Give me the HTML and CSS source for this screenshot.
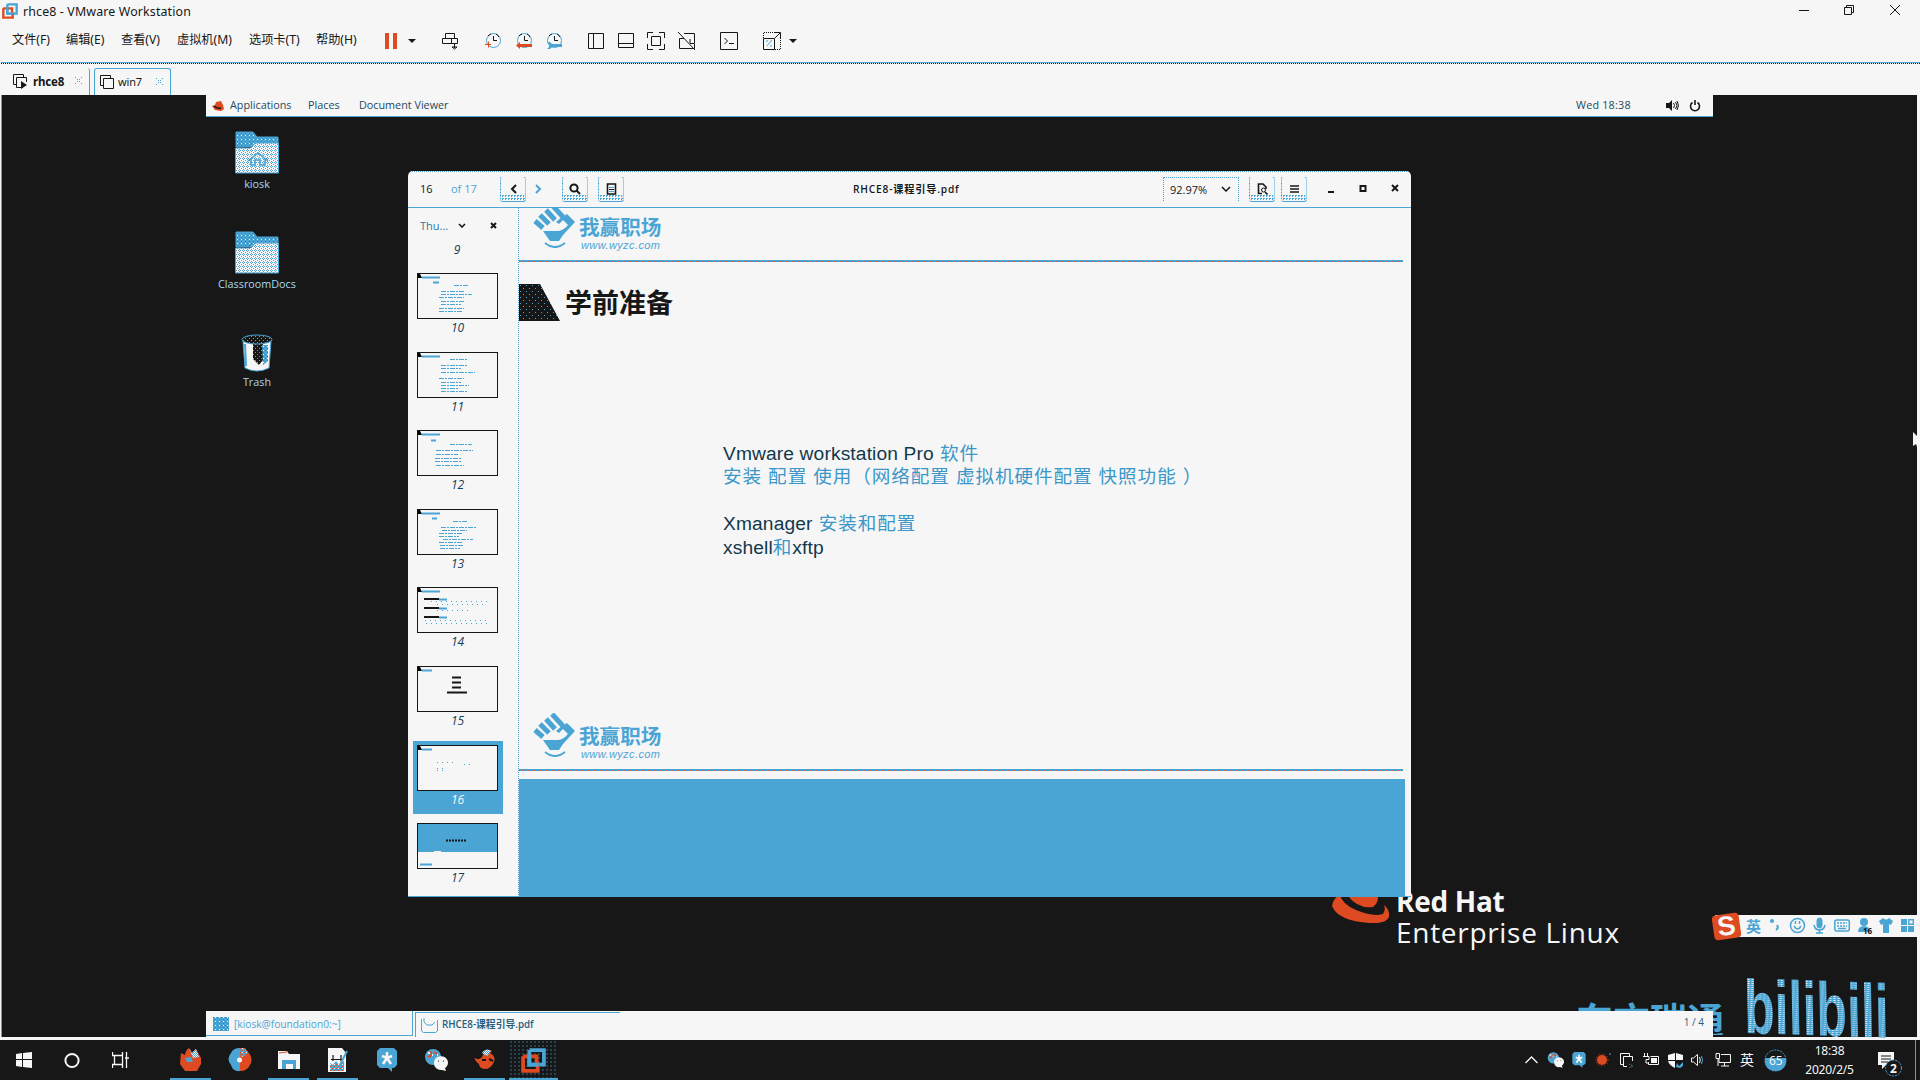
FILE: index.html
```html
<!DOCTYPE html>
<html lang="zh-CN">
<head>
<meta charset="utf-8">
<title>rhce8 - VMware Workstation</title>
<link rel="stylesheet" href="styles.css">
</head>
<body>
<svg class="defs" width="0" height="0">
  <defs>
    <pattern id="mesh" width="2" height="2" patternUnits="userSpaceOnUse"><rect width="2" height="2" fill="#f6f6f6"/><path d="M0 0h1v1H0zM1 1h1v1H1z" fill="#4aa5d5"/></pattern>
    <pattern id="light" width="4" height="4" patternUnits="userSpaceOnUse"><rect width="4" height="4" fill="#f6f6f6"/><path d="M0 0h1v1H0zM2 1h1v1H2zM0 2h1v1H0zM1 3h1v1H1zM3 3h1v1H3z" fill="#4aa5d5"/></pattern>
    <pattern id="warm" width="4" height="4" patternUnits="userSpaceOnUse"><rect width="4" height="4" fill="#4aa5d5"/><path d="M0 0h1v1H0zM2 2h1v1H2z" fill="#de4a21"/><path d="M2 0h1v1H2z" fill="#f6f6f6"/></pattern>
    <pattern id="night" width="4" height="4" patternUnits="userSpaceOnUse"><rect width="4" height="4" fill="#171717"/><path d="M0 0h1v1H0zM2 2h1v1H2z" fill="#4aa5d5"/></pattern>
    <pattern id="speck" width="6" height="6" patternUnits="userSpaceOnUse"><rect width="6" height="6" fill="#171717"/><path d="M1 1h1v1H1zM4 4h1v1H4z" fill="#4aa5d5"/></pattern>
    <symbol id="folder" viewBox="0 0 44 43">
      <path d="M1 16V1h17l4 5h21v9z" fill="url(#warm)" stroke="#4aa5d5"/>
      <path d="M0.500 42V17h15l5-5h23v30z" fill="url(#light)" stroke="#4aa5d5"/>
    </symbol>
    <symbol id="brand" viewBox="0 0 43 44">
      <g stroke="#4aa5d5" stroke-width="5"><path d="M2 17l8 7M7 11l9 9M13 6l9 10M19 1l11 12"/></g>
      <path d="M10 27h14q6 0 11-6l-5-5-4 4-3-2 6-5 5-3 8 8-12 13-4 6H17z" fill="#4aa5d5"/>
      <path d="M12 39q10 8 20 0" fill="none" stroke="#4aa5d5" stroke-width="2"/>
    </symbol>
    <symbol id="clock" viewBox="0 0 17 18">
      <circle cx="8.500" cy="8.500" r="7" fill="none" stroke="#4aa5d5"/><path d="M3 4a7 7 0 0 1 3-2M11 2a7 7 0 0 1 3 3" fill="none" stroke="#171717"/><path d="M8.500 4v4.500H12" fill="none" stroke="#171717"/>
    </symbol>
    <symbol id="star" viewBox="0 0 20 24">
      <path d="M3 0h14l3 3v14l-3 3h-2v4l-4-4H3l-3-3V3z" fill="#4aa5d5"/>
      <path d="M10 4v6l5-2M10 10l4 6M10 10l-4 6M10 10L5 8" fill="none" stroke="#f6f6f6" stroke-width="2.600"/>
    </symbol>
    <symbol id="chat" viewBox="0 0 24 22">
      <circle cx="9" cy="8" r="8" fill="#4aa5d5"/><path d="M5 3l3 1M4 8l4-2M10 3l3 2" stroke="#de4a21" stroke-width="2"/><path d="M8 6h1M13 6h1M4 4h2" stroke="#f6f6f6" stroke-width="2"/>
      <path d="M10 14a7 6.500 0 1 1 11 5l1 3-4-1a7 6.500 0 0 1-8-7z" fill="#f6f6f6"/><path d="M14 12h1M19 12h1" stroke="#171717"/>
    </symbol>
    <symbol id="vm" viewBox="0 0 24 24">
      <path d="M8 2h14v14h-5M8 2v14h9" fill="none" stroke="#4aa5d5" stroke-width="3.600"/>
      <path d="M2 8h13v6M2 8v14h14v-8" fill="none" stroke="#de4a21" stroke-width="3.600"/>
      <path d="M8 6v10h9" fill="none" stroke="#4aa5d5" stroke-width="3.600"/>
    </symbol>
  </defs>
</svg>

<div class="screen">
  <header class="titlebar">
    <svg width="16" height="16"><use href="#vm"/></svg>
    <span class="app-name">rhce8 - VMware Workstation</span>
    <svg class="controls" width="102" height="12" fill="none" stroke="#171717"><path d="M0 5.500h10M45.500 2.500h7v7h-7zM47.500 2.500v-2h7v7h-2M91 0l10 10M101 0L91 10"/></svg>
  </header>
  <div class="menubar">
    <nav class="menus"><span>文件(F)</span><span>编辑(E)</span><span>查看(V)</span><span>虚拟机(M)</span><span>选项卡(T)</span><span>帮助(H)</span></nav>
    <div class="toolbar">
      <svg width="12" height="16"><path d="M0 0h4v16H0zM8 0h4v16H8z" fill="#de4a21"/></svg>
      <svg width="9" height="5"><path d="M0 0h8L4 4z" fill="#171717"/></svg>
      <svg width="17" height="17" fill="none" stroke="#171717"><path d="M3.500 .5h9v5h-9zM.5 5.500h9v5h-9zM9.500 5.500h6v5h-6zM12.500 11v4M10 14h5l-2.500 2z"/></svg>
      <svg width="17" height="18"><use href="#clock"/><path d="M0 12.500h6M3.500 9.500v6" stroke="#de4a21"/></svg>
      <svg width="17" height="18"><use href="#clock"/><path d="M0 13.500l4-3.500v2h12v3H4v2z" fill="#de4a21"/></svg>
      <svg width="17" height="18"><use href="#clock"/><path d="M1 10h3l2 2h10v3H6l-2 2H1l2-2v-3z" fill="#4aa5d5"/></svg>
      <svg width="16" height="16" fill="none" stroke="#171717"><path d="M.5 .5h15v15H.5zM5.500 0v16"/></svg>
      <svg width="16" height="16" fill="none" stroke="#171717"><path d="M.5 .5h15v14H.5zM0 10.500h16"/></svg>
      <svg width="18" height="18" fill="none" stroke="#171717"><path d="M4.500 4.500h9v9h-9zM.5 6V.5H6M12 .5h5.500V6M17.500 12v5.500H12M6 17.500H.5V12"/></svg>
      <svg width="18" height="18" fill="none" stroke="#171717"><path d="M6 1.500h10.500v10H12M1.500 6.500v10h15V12M6 6.500H1.500M12 7v4M0 0l17 18"/></svg>
      <svg width="18" height="18" fill="none" stroke="#171717"><path d="M.5 .5h17v17H.5zM4.500 6l3 3-3 3M9 11.500h5"/></svg>
      <svg width="18" height="18" fill="none" stroke="#171717"><path d="M.5 6.500h11v11H.5zM12 6l5-5M12 .5h5.500V6"/><path stroke-dasharray="1 1" d="M.5 6V.5H12M17.500 6v11.500H12"/><path stroke="#4aa5d5" d="M4 14l5-6M3 9h2M7 14h2"/></svg>
      <svg width="9" height="5"><path d="M0 0h8L4 4z" fill="#171717"/></svg>
    </div>
  </div>
  <div class="tabs">
    <div class="tab tab-on"><svg width="15" height="15" fill="none" stroke="#171717"><path d="M3 10.500H.5V.5h10V3M8 13.500H3.500v-10h10V8"/><path d="M8 7l6 4-6 4z" fill="#171717" stroke="none"/></svg><b>rhce8</b><svg class="tab-x" width="7" height="7"><path d="M0 0l7 7M7 0L0 7" stroke="#4aa5d5" stroke-dasharray="1.400 1.400"/></svg></div>
    <div class="tab tab-off"><svg width="15" height="15" fill="none" stroke="#171717"><path d="M3 10.500H.5V.5h10V3M3.500 3.500h10v10h-10z"/></svg><span>win7</span><svg class="tab-x" width="7" height="7"><path d="M0 0l7 7M7 0L0 7" stroke="#4aa5d5" stroke-dasharray="1.400 1.400"/></svg></div>
  </div>

  <main class="vm-view">
    <div class="guest">
      <div class="gnome-bar">
        <svg width="12" height="10"><path d="M0 5l3-1 1-3 5-1 2 4 1 4-3 2-6-1z" fill="#de4a21"/><path d="M2 5q3 3 7 2" fill="none" stroke="#171717" stroke-width="1.500"/></svg>
        <span class="g-apps">Applications</span><span class="g-places">Places</span><span class="g-doc">Document Viewer</span>
        <span class="g-clock">Wed 18:38</span>
        <svg width="13" height="11" fill="none" stroke="#171717"><path d="M0 3h3l3-3v11L3 8H0z" fill="#171717" stroke="none"/><path d="M7.500 3q2 2.500 0 5M9.500 2q3 3.500 0 7M11 1q3 4.500 0 9"/></svg>
        <svg class="power" width="12" height="12" fill="none" stroke="#171717" stroke-width="1.600"><path d="M3.500 2.500a4.500 4.500 0 1 0 5 0M6 0v5"/></svg>
      </div>
      <div class="desktop">
        <div class="shortcut kiosk"><svg width="44" height="43"><use href="#folder"/><path d="M13 30l10-8 10 8M16 28v6h4v-5h5v5h5v-6" fill="none" stroke="#4aa5d5" stroke-width="1.600"/></svg><span>kiosk</span></div>
        <div class="shortcut docs"><svg width="44" height="43"><use href="#folder"/></svg><span>ClassroomDocs</span></div>
        <div class="shortcut trash"><svg width="32" height="38"><path d="M2 7l2 27q12 6 24 0l2-27z" fill="#f6f6f6" stroke="#4aa5d5"/><path d="M12 10h10v16l-4 5-6-6z" fill="url(#night)"/><path d="M21 11h6v16l-5 4z" fill="url(#warm)"/><path d="M4 10l1 22" stroke="#4aa5d5" stroke-width="2"/><ellipse cx="16" cy="5.500" rx="15" ry="4.500" fill="url(#night)" stroke="#4aa5d5"/></svg><span>Trash</span></div>

        <div class="rhel">
          <svg width="57" height="44"><path d="M0 27Q1 19 8 16q2 9 16 15 17 7 27 4 3-4 1-9 6 5 5 12-3 7-19 6Q6 42 0 27z" fill="#de4a21"/><path d="M16 15h29q3 8-4 13-15 2-25-11z" fill="#de4a21"/></svg>
          <div><b>Red Hat</b><span>Enterprise Linux</span></div>
        </div>
        <div class="partner">东方瑞通</div>

        <section class="viewer">
          <header class="viewer-bar">
            <span class="page-no">16</span><span class="page-of">of 17</span>
            <span class="btn prev"><svg width="7" height="10"><path d="M6 1L2 5l4 4" fill="none" stroke="#171717" stroke-width="2"/></svg></span>
            <span class="next"><svg width="7" height="10"><path d="M1 1l4 4-4 4" fill="none" stroke="#4aa5d5" stroke-width="2"/></svg></span>
            <span class="btn find"><svg width="12" height="12" fill="none" stroke="#171717" stroke-width="2"><circle cx="5" cy="5" r="3.600"/><path d="M7.500 7.500L11 11"/></svg></span>
            <span class="btn note"><svg width="11" height="12"><path d="M1.500 1h8v10h-8z" fill="none" stroke="#171717" stroke-width="1.600"/><path d="M3 4.500h5M3 8.500h5" stroke="#4aa5d5"/><path d="M3 6.500h5" stroke="#171717"/></svg></span>
            <span class="doc-title">RHCE8-课程引导.pdf</span>
            <span class="zoom-box"><span>92.97%</span><svg width="10" height="6"><path d="M1 1l4 4 4-4" fill="none" stroke="#171717" stroke-width="1.500"/></svg></span>
            <span class="btn page"><svg width="11" height="12"><path d="M5 10.500H1.500V1H6l3 3v2" fill="none" stroke="#171717" stroke-width="1.600"/><circle cx="6.500" cy="7" r="2" fill="none" stroke="#171717"/><path d="M8 9l2.500 2.500" stroke="#171717" stroke-width="1.600"/></svg></span>
            <span class="btn burger"><svg width="9" height="8"><path d="M0 1h9M0 4h9M0 7h9" stroke="#171717" stroke-width="1.500"/></svg></span>
            <svg class="win-ctl" width="71" height="9"><path d="M0 8h6M64 1l6 6M70 1l-6 6" stroke="#171717" stroke-width="2"/><path d="M32.500 2h5v5h-5z" fill="none" stroke="#171717" stroke-width="2"/></svg>
          </header>
          <div class="viewer-body">
            <aside class="thumbs">
              <div class="thumbs-head"><span>Thu...</span><svg width="8" height="5"><path d="M1 1l3 3 3-3" fill="none" stroke="#171717" stroke-width="1.600"/></svg><svg width="7" height="7"><path d="M1 1l5 5M6 1L1 6" stroke="#171717" stroke-width="2"/></svg></div>
              <i class="first-no">9</i>
              <div class="thumb"><svg width="81" height="46"><path d="M24 18.500h23M24 21.500h31M22 24.500h25M24 28.500h24M24 31.500h20M22 35.500h25M22 38.500h24M37 12.500h14" class="ln"/><path d="M5 4.500h18M16 9.500h6" class="hd"/><path d="M1 1h2l2 4H1z"/></svg><i>10</i></div>
              <div class="thumb"><svg width="81" height="46"><path d="M24 13.500h26M24 16.500h20M24 20.500h34M22 26.500h25M24 30.500h20M24 33.500h28M24 36.500h18M24 39.500h26M33 7.500h18" class="ln"/><path d="M5 4.500h18" class="hd"/><path d="M1 1h2l2 4H1z"/></svg><i>11</i></div>
              <div class="thumb"><svg width="81" height="46"><path d="M19 20.500h37M19 24.500h22M18 28.500h27M18 31.500h26M19 35.500h28M33 14.500h22" class="ln"/><path d="M5 4.500h18M14 10.500h5" class="hd"/><path d="M1 1h2l2 4H1z"/></svg><i>12</i></div>
              <div class="thumb"><svg width="81" height="46"><path d="M24 18.500h36M25 21.500h25M22 24.500h23M22 27.500h20M26 30.500h30M22 33.500h24M23 36.500h24M23 39.500h20M36 12.500h14" class="ln"/><path d="M5 4.500h18M15 9.500h5" class="hd"/><path d="M1 1h2l2 4H1z"/></svg><i>13</i></div>
              <div class="thumb"><svg width="81" height="46"><path d="M14 14.500h56M20 17.500h50M20 23.500h34M8 33.500h64M9 36.500h62" class="dots"/><path d="M7 12h15M7 21h15M7 30h15" stroke="#171717" stroke-width="2"/><path d="M5 4.500h18M22 12.500h8M22 21.500h8M22 30.500h8" class="hd"/><path d="M1 1h2l2 4H1z"/></svg><i>14</i></div>
              <div class="thumb"><svg width="81" height="46"><path d="M5 4.500h10" class="hd"/><path d="M35 11.500h9M35 16.500h9M35 21.500h9M30 26.500h20" stroke="#171717" stroke-width="2"/><path d="M1 1h2l2 4H1z"/></svg><i>15</i></div>
              <div class="thumb chosen"><svg width="81" height="46"><path d="M20 17.500h20M47 19.500h8M20 23.500h7M20 25.500h6" class="dots"/><path d="M5 4.500h10" class="hd"/><path d="M1 1h2l2 4H1z"/></svg><i>16</i></div>
              <div class="thumb last"><svg width="81" height="46"><path d="M1 1h79v28H1z" fill="#4aa5d5"/><path d="M29 17.500h20" stroke="#171717" stroke-width="2" stroke-dasharray="2 1"/><path d="M17 28.500h7" stroke="#f6f6f6"/><path d="M3 41.500h12" class="hd"/></svg><i>17</i></div>
            </aside>
            <div class="pages">
              <div class="logo logo-cut"><svg width="43" height="44"><use href="#brand"/></svg><div><b>我赢职场</b><small>www.wyzc.com</small></div></div>
              <div class="rule"></div>
              <h1 class="slide-title"><svg width="41" height="37"><path d="M0 0h21l20 37H0z" fill="url(#speck)"/></svg><span>学前准备</span></h1>
              <div class="slide-text">
                <p><em>Vmware workstation Pro</em> 软件</p>
                <p>安装 配置 使用（网络配置 虚拟机硬件配置 快照功能 ）</p>
                <p class="gap"><em>Xmanager</em> 安装和配置</p>
                <p><em>xshell</em>和<em>xftp</em></p>
              </div>
              <div class="logo logo-foot"><svg width="43" height="44"><use href="#brand"/></svg><div><b>我赢职场</b><small>www.wyzc.com</small></div></div>
              <div class="rule"></div>
              <div class="next-page"></div>
            </div>
          </div>
        </section>
      </div>
      <div class="guest-tasks">
        <div class="gt gt-a"><svg width="16" height="14"><rect width="16" height="14" fill="url(#warm)"/></svg><span>[kiosk@foundation0:~]</span></div>
        <div class="gt gt-b"><svg width="17" height="16" fill="none" stroke="#4aa5d5"><path d="M.5 2v12l2 1.500h12l2-1.500V3M3 1v4l3 3h5l3-3"/></svg><span>RHCE8-课程引导.pdf</span></div>
        <span class="pager">1 / 4</span>
      </div>
    </div>
    <div class="ime">
      <span class="sogou">S</span>
      <span class="ime-lang">英</span>
      <svg width="157" height="18" fill="none" stroke="#4aa5d5">
        <circle cx="2" cy="4" r="2" fill="#4aa5d5" stroke="none"/><path d="M7 8q2 3-1 5" stroke-width="2"/>
        <g transform="translate(20 0)"><circle cx="7.500" cy="8.500" r="7" stroke-width="1.500"/><path d="M4 9q3.500 6 7 0M5.500 4v3M9.500 4v3" stroke-width="1.500"/></g>
        <g transform="translate(43 0)"><rect x="4" y="1" width="5" height="10" rx="2.500" fill="#4aa5d5"/><path d="M1 8q1 5 5.500 5t5.500-5M6.500 13v3M3 16h7" stroke-width="1.500"/></g>
        <g transform="translate(64 2)"><rect x=".8" y="1" width="14.500" height="11" rx="2" stroke-width="1.500"/><path d="M3 4h10M3 7h10" stroke-width="1.500" stroke-dasharray="2 1"/><path d="M4 9.500h8" stroke-width="1.500"/></g>
        <g transform="translate(87 0)" stroke="none" fill="#4aa5d5"><circle cx="7" cy="5" r="4"/><path d="M1 15q0-6 6-6t6 6z"/><text x="6" y="17" font-size="8" font-weight="bold" fill="#171717">16</text></g>
        <path transform="translate(109 1)" d="M0 3l4-3q3 3 6 0l4 3-2 4-2-1v9H4V6L2 7z" fill="#4aa5d5" stroke="none"/>
        <path transform="translate(131 2)" d="M0 0h6v6H0zM0 7h6v6H0zM7 7h6v6H7z" fill="#4aa5d5" stroke="none"/><path d="M138.800 2.800h4.500v4.500h-4.500z" stroke-width="1.400"/>
      </svg>
    </div>
    <div class="watermark">bilibili</div>
    <svg class="pointer" width="4" height="16"><path d="M0 0v14l3-2 1 3V4z" fill="#f6f6f6"/></svg>
  </main>

  <footer class="taskbar">
    <div class="launch">
      <span><svg width="16" height="16"><path d="M0 2l6-1v6H0zM7 1l9-1v7H7zM0 8h6v7l-6-1zM7 8h9v8l-9-1z" fill="#f6f6f6"/></svg></span>
      <span><svg width="17" height="17"><circle cx="8" cy="8.500" r="6.600" fill="none" stroke="#f6f6f6" stroke-width="2"/></svg></span>
      <span class="wide"><svg width="17" height="16" fill="none" stroke="#f6f6f6"><path d="M.5 0v3.500h10V0M.5 16v-3.500h10V16M2.500 3.500h8v9h-8zM14.500 0v16M13 6h4" stroke-width="1.300"/></svg></span>
      <span class="on"><svg width="23" height="24"><path d="M2 5l4 2q0-4 4-7l3 5 4-4 5 9v6l-4 7H6l-5-7z" fill="#de4a21"/><path d="M10 0l3 5 4-4 3 8-6 1z" fill="url(#mesh)"/><path d="M6 10l6-1 2 5H8z" fill="#4aa5d5"/></svg></span>
      <span><svg width="24" height="24"><path d="M12 0q-7 0-9 5-5 6 0 12 2 7 9 6z" fill="#4aa5d5"/><path d="M12 0q8 1 8 4 5 5 3 11-4 9-11 8z" fill="#de4a21"/><path d="M12 0h5l3 5-7 5z" fill="url(#warm)"/><circle cx="11.500" cy="12" r="2.500" fill="#f6f6f6"/></svg></span>
      <span class="on"><svg width="22" height="18"><path d="M0 0h9l2 3h11v15H0z" fill="#f6f6f6"/><path d="M1 2l8-1" stroke="#de4a21"/><path d="M4 18V9h14v9h-3v-5H8v5z" fill="#4aa5d5"/></svg></span>
      <span class="on"><svg width="20" height="24"><path d="M0 0h14l4 5v19H0z" fill="#f6f6f6"/><path d="M2 23v-8l3 2 3-4 3 4 5-4v10z" fill="url(#warm)"/><path d="M3 11.500h12M5 7v6M13 7v6" stroke="#171717" stroke-width="1.200"/><path d="M12 17l7-14" stroke="#4aa5d5" stroke-width="2"/></svg></span>
      <span><svg width="20" height="24"><use href="#star"/></svg></span>
      <span><svg width="24" height="22"><use href="#chat"/></svg></span>
      <span class="on"><svg width="22" height="22"><path d="M0 9q7 3 9-3Q12-2 18 2l-2 2q6 3 4 9-4 8-10 7-5-1-5-5-3-2-5-6z" fill="#de4a21"/><path d="M8 4q4-6 9-2l-4 5z" fill="url(#mesh)"/><path d="M8 11h4M15 10l4 2" stroke="#171717" stroke-width="2"/></svg></span>
      <span class="on active"><svg width="25" height="25"><use href="#vm"/></svg></span>
    </div>
    <div class="tray">
      <svg width="13" height="8"><path d="M.5 7l6-6 6 6" fill="none" stroke="#f6f6f6" stroke-width="1.300"/></svg>
      <svg width="17" height="16"><use href="#chat"/></svg>
      <svg width="14" height="16"><use href="#star"/></svg>
      <svg width="17" height="14"><circle cx="7" cy="7" r="5" fill="#de4a21"/><circle cx="7" cy="7" r="6" fill="none" stroke="#de4a21" stroke-dasharray="1 2"/><path d="M15 0v2" stroke="#4aa5d5"/></svg>
      <svg width="14" height="15" fill="none" stroke="#f6f6f6"><path d="M3 11.500H.5V.5h9V3M12.500 8V3.500h-9v10H7"/><path d="M9 11l4 2-4 2" stroke="#4aa5d5" stroke-dasharray="1 1"/></svg>
      <svg width="17" height="14" fill="none" stroke="#f6f6f6"><path d="M1.500 0v3M4.500 0v3M0 3.500h6v3H3V10h3M7.500 3.500h8v8h-10V9"/><path d="M8 5h6v5H8z" fill="#f6f6f6" stroke="none"/></svg>
      <svg width="15" height="15"><path d="M7 0v7H0V2zM8 0l7 2v5H8zM0 8h7v7q-6-3-7-7z" fill="#f6f6f6"/><path d="M9 10l2 3 4-4v4l-3 2-4-1z" fill="#4aa5d5"/></svg>
      <svg width="12" height="12" fill="none" stroke="#f6f6f6"><path d="M.5 4h2l4-3.500v11L2.500 8h-2zM8.500 3q1.500 3 0 6"/><path d="M10.500 2q2 4 0 8" stroke="#4aa5d5"/></svg>
      <svg width="17" height="14" fill="none" stroke="#f6f6f6"><path d="M6 1.500h9.500v8H4V6M9.500 10v3M6 13h8M1 .5h3.500v5H1zM3 6v7"/></svg>
      <span class="tray-lang">英</span>
      <svg width="23" height="23"><circle cx="11.500" cy="11.500" r="10.500" fill="#171717" stroke="#4aa5d5" stroke-dasharray="2 1"/><path d="M1 9h21v5q-2 8-10.500 8T1 14z" fill="#4aa5d5"/><text x="5" y="16" font-size="12" fill="#f6f6f6">65</text></svg>
      <div class="time"><span>18:38</span><span>2020/2/5</span></div>
      <svg class="note-ic" width="25" height="25"><path d="M0 0h16v13H8l-4 4v-4H0z" fill="#f6f6f6"/><path d="M3 4h10M3 7h10M3 10h7" stroke="#171717"/><circle cx="15.500" cy="16" r="8" fill="#171717" stroke="#4aa5d5" stroke-dasharray="2 1"/><text x="12" y="20.500" font-size="12" font-weight="bold" fill="#f6f6f6">2</text></svg>
    </div>
  </footer>
</div>
</body>
</html>
```
FILE: styles.css
```css
* { box-sizing: border-box; }
:root { --paper: #f6f6f6; --ink: #171717; --blue: #4aa5d5; --red: #de4a21; }
body { margin: 0; background: var(--paper); color: var(--ink); font-family: "Noto Sans", "Noto Sans CJK SC", sans-serif; font-size: 12px; }
svg { display: block; flex: none; }
.defs { position: absolute; }
.screen { width: 1920px; height: 1080px; display: flex; flex-direction: column; overflow: hidden; white-space: nowrap; }

.titlebar { height: 24px; padding: 0 19px 2px 2px; display: flex; align-items: center; gap: 5px; }
.app-name { font-size: 12.4px; letter-spacing: .14px; }
.controls { margin: 0 0 0 auto; }
.menubar { height: 38px; display: flex; }
.menus { width: 385px; padding-left: 12px; display: grid; grid-template-columns: 54px 55px 56px 72px 67px 60px; line-height: 32px; font-size: 12.200px; }
.toolbar { height: 34px; display: grid; align-items: center; grid-template-columns: 23px 34px 43px 31px 30px 42px 30px 29px 31px 42px 43px 26px 9px; }

.tabs { height: 33px; margin-left: 1px; border-top: 1px solid var(--blue); padding: 5px 0 0 1px; display: flex; gap: 4px; background: repeating-linear-gradient(90deg, var(--ink) 0 1px, var(--paper) 1px 2px) 0 0 / 100% 1px no-repeat; }
.tab { height: 27px; display: flex; align-items: center; border-right: 1px solid var(--blue); }
.tab-on { width: 88px; padding-left: 11px; border-radius: 0 3px 0 0; }
.tab-off { width: 77px; padding-left: 5px; border: solid var(--blue); border-width: 1px 1px 0; border-radius: 3px 3px 0 0; }
.tab svg + b, .tab svg + span { margin: -1px 0 0 5px; font-size: 11.500px; letter-spacing: -.15px; }
.tab svg + span { margin-left: 3px; font-size: 11px; }
.tab-x { margin: -2px 7px 0 auto; }

.vm-view { position: relative; height: 942px; margin: 0 3px 0 1px; border-left: 1px solid var(--blue); background: var(--ink); padding-left: 204px; }
.guest { width: 1507px; height: 942px; display: flex; flex-direction: column; font-family: "Open Sans", "Noto Sans CJK SC", sans-serif; }
.gnome-bar { height: 22px; background: var(--paper); border-bottom: 1px solid var(--blue); display: flex; align-items: center; padding: 0 12px 0 6px; font-size: 10.800px; color: #1d4a63; }
.gnome-bar span { margin-top: -2px; }
.gnome-bar .g-apps { margin-left: 6px; width: 78px; }
.g-places { width: 51px; }
.gnome-bar .g-clock { margin-left: auto; width: 90px; letter-spacing: .2px; }
.power { margin-left: 10px; }

.desktop { position: relative; height: 894px; }
.shortcut { position: absolute; left: 1px; width: 100px; display: flex; flex-direction: column; align-items: center; color: #a9d8ef; font-size: 10.800px; line-height: 20px; }
.kiosk { top: 14px; } .docs { top: 114px; } .trash { top: 217px; }

.viewer { position: absolute; left: 202px; top: 54px; width: 1003px; height: 726px; background: var(--paper); border-radius: 5px 5px 0 0; overflow: hidden; border-bottom: 1px solid var(--blue); }
.viewer-bar { height: 37px; border-top: 1px dotted var(--blue); border-bottom: 1px solid var(--blue); display: flex; align-items: center; padding: 0 0 2px 12px; font-size: 11px; }
.page-no { width: 31px; }
.page-of { color: var(--blue); width: 49px; }
.btn { width: 26px; height: 26px; margin-top: 1px; border: 1px dotted var(--blue); border-top-color: transparent; border-bottom: 1px solid var(--blue); border-radius: 3px; display: flex; align-items: center; justify-content: center; background: conic-gradient(var(--blue) 25%, transparent 0 50%, var(--blue) 0 50%, transparent 0) 0 100% / 3px 3px; box-shadow: inset 0 18px 0 var(--paper); }
.next { width: 36px; padding-left: 9px; }
.note { margin-left: 10px; }
.doc-title { margin-left: 229px; width: 310px; font-weight: 600; font-size: 11px; letter-spacing: .8px; font-size: 10.200px; }
.zoom-box { width: 76px; height: 24px; border: 1px dotted var(--blue); border-bottom: 0; display: flex; align-items: center; gap: 14px; padding-left: 6px; }
.page { margin-left: 10px; }
.burger { margin-left: 6px; }
.win-ctl { margin-left: 21px; }
.viewer-body { display: flex; height: 689px; }
.thumbs { width: 111px; border-right: 1px dotted var(--blue); color: #174057; }
.thumbs-head { height: 35px; display: flex; align-items: center; padding: 0 21px 0 12px; color: #32789d; font-size: 11px; }
.thumbs-head span { width: 38px; }
.thumbs-head svg + svg { margin-left: auto; }
.first-no { display: block; width: 98px; text-align: center; height: 26px; line-height: 13px; font-size: 12px; }
.thumb { height: 78.600px; width: 90px; margin-left: 5px; padding: 4px; display: flex; flex-direction: column; text-align: center; line-height: 18px; font-size: 12px; }
.thumb i { width: 81px; }
.thumb svg { outline: 1px solid var(--ink); outline-offset: -1px; background: var(--paper); }
.chosen { background: var(--blue); color: var(--paper); height: 73px; margin-bottom: 5.600px; }
.ln { stroke: var(--blue); stroke-dasharray: 5 1 2 1; fill: none; }
.dots { stroke: var(--blue); stroke-dasharray: 1 4; fill: none; }
.hd { stroke: var(--blue); stroke-width: 2; }

.pages { width: 886px; }
.logo { display: flex; padding-left: 14px; gap: 3px; color: var(--blue); height: 52px; }
.logo b { display: block; font: 700 20.600px/24px "Noto Sans CJK SC", sans-serif; }
.logo small { display: block; font: italic 11px/15px "Liberation Sans", sans-serif; letter-spacing: .4px; padding-left: 2px; }
.logo-cut { overflow: hidden; }
.logo-cut svg { margin-top: -4px; }
.logo div { padding-top: 6px; }
.rule { height: 2px; width: 884px; background: linear-gradient(var(--blue) 0 1px, transparent 1px), repeating-linear-gradient(90deg, var(--red) 0 1px, var(--blue) 1px 3px); }
.slide-title { margin: 22px 0 0; height: 37px; display: flex; gap: 5px; font: bold 27px/35px "Noto Sans CJK SC", sans-serif; }
.slide-text { margin: 121px 0 0 204px; height: 271px; color: #3c97c8; font: 400 18.600px/23.400px "Liberation Sans", "Noto Sans CJK SC", sans-serif; letter-spacing: .92px; }
.slide-text p { margin: 0; height: 23.400px; }
.slide-text .gap { margin-top: 23.400px; }
.slide-text em { font-style: normal; font-size: 19.200px; color: #12384c; letter-spacing: .13px; }
.logo-foot { height: 56px; }
.logo-foot div { padding-top: 10px; }
.next-page { height: 118px; margin-top: 8px; background: var(--blue); }

.rhel { position: absolute; left: 1126px; top: 762px; display: flex; gap: 7px; color: var(--paper); font-family: "Open Sans", sans-serif; }
.rhel b { display: block; font: bold 28px/32px "Open Sans", sans-serif; letter-spacing: -.3px; margin-top: 6px; }
.rhel span { display: block; font-size: 28px; line-height: 32px; letter-spacing: .7px; margin-top: -1px; }
.partner { position: absolute; left: 1370px; top: 875px; height: 43px; overflow: hidden; color: var(--blue); font: bold 37px/54px "Noto Sans CJK SC", sans-serif; }
.guest-tasks { position: relative; height: 26px; background: var(--paper); display: flex; font-size: 11px; }
.gt { display: flex; align-items: center; }
.gt-a { width: 207px; height: 25px; padding: 2px 0 0 7px; gap: 5px; color: var(--blue); border: solid var(--blue); border-width: 0 1px 1px 0; font-size: 10.200px; }
.gt-b { margin: 1px 0 0 2px; width: 205px; padding-left: 5px; gap: 4px; border: solid var(--blue); border-width: 1px 0 0 1px; color: #24607f; font-weight: 600; font-size: 9.800px; }
.gt-b span { margin-top: -2px; }
.pager { margin: 4px 9px 0 auto; color: #24607f; font-size: 10px; }

.ime { position: absolute; left: 1713px; top: 820px; width: 202px; height: 22px; background: var(--paper); display: flex; align-items: center; color: var(--blue); }
.sogou { margin-left: -2px; width: 27px; height: 25px; flex: none; background: var(--red); color: var(--paper); border-radius: 4px; transform: rotate(-8deg); font: bold 27px/25px "Liberation Sans", sans-serif; text-align: center; }
.ime-lang { margin-left: 6px; width: 24px; flex: none; font: bold 15px/20px "Noto Sans CJK SC", sans-serif; }
.ime > svg { width: 157px; overflow: visible; }
.watermark { position: absolute; z-index: 2; left: 1742px; top: 870px; color: transparent; background: conic-gradient(#f6f6f6 25%, var(--blue) 0) 0 0 / 2px 2px; background-clip: text; -webkit-background-clip: text; font: bold 76px/84px "Liberation Sans", sans-serif; transform: rotate(2deg) skewX(3deg) scaleX(.66); transform-origin: 0 50%; }
.pointer { position: absolute; right: 0; top: 337px; }

.taskbar { margin-top: 3px; height: 40px; background: var(--ink); color: var(--paper); display: flex; justify-content: space-between; }
.launch { display: flex; }
.launch span { width: 49px; height: 40px; display: flex; align-items: center; justify-content: center; }
.launch span:first-child { width: 48px; }
.launch .wide { width: 46px; margin-right: 23px; }
.on { background: linear-gradient(var(--blue), var(--blue)) 50% 100% / 41px 2px no-repeat; }
.launch .active { background: linear-gradient(var(--blue), var(--blue)) 0 100% / 100% 2px no-repeat, radial-gradient(var(--blue) .5px, var(--ink) .8px) 0 0 / 4px 4px; }
.tray { width: 395px; display: grid; grid-template-columns: 22px 25px 23px 25px 23px 25px 23px 24px 25px 24px 35px 79px 37px; align-items: center; }
.tray { background: linear-gradient(var(--blue), var(--blue)) 390px 0 / 1px 100% no-repeat; }
.tray-lang { font-size: 14px; line-height: 20px; }
.time { display: flex; flex-direction: column; width: 61px; align-items: center; line-height: 19px; font-size: 12px; letter-spacing: -.2px; }
.note-ic { margin-top: 8px; }
```
